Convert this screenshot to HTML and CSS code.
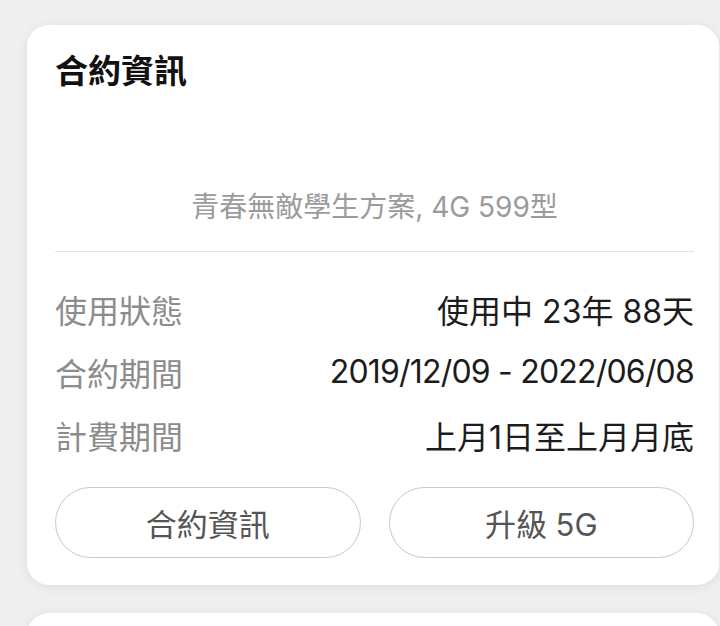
FILE: index.html
```html
<!DOCTYPE html>
<html lang="zh-Hant">
  <head>
    <meta charset="UTF-8" />
    <meta name="viewport" content="width=device-width, initial-scale=1.0" />
    <title>合約資訊</title>
    <link rel="stylesheet" href="styles.css">
  </head>
  <body>
    <div class="card" id="contract-card">
      <h2 class="card-title">合約資訊</h2>
      <p class="plan-name">青春無敵學生方案, 4G 599型</p>
      <div class="info-list">
        <div class="info-row">
          <span class="info-label">使用狀態</span>
          <span class="info-value">使用中 23年 88天</span>
        </div>
        <div class="info-row">
          <span class="info-label">合約期間</span>
          <span class="info-value date-range">2019/12/09 - 2022/06/08</span>
        </div>
        <div class="info-row">
          <span class="info-label">計費期間</span>
          <span class="info-value">上月1日至上月月底</span>
        </div>
      </div>
      <div class="actions">
        <button class="pill-btn">合約資訊</button>
        <button class="pill-btn">升級 5G</button>
      </div>
    </div>

    <div class="card card-next"></div>
  </body>
</html>
```

FILE: styles.css
```css
body {
  margin: 0;
  padding: 25px 1px 0 27px;
  background-color: #efefef;
  font-family: Inter, "Noto Sans CJK TC", sans-serif;
  overflow: hidden;
}

.card {
  background: #ffffff;
  border-radius: 22px;
  padding: 26px 25px 27px 28px;
  box-shadow: 0 2px 12px rgba(0, 0, 0, 0.07);
}

.card-title {
  margin: 0;
  font-size: 33px;
  line-height: 40px;
  font-weight: 700;
  color: #111;
}

.plan-name {
  margin: 96px 0 0;
  text-align: center;
  font-size: 28px;
  line-height: 40px;
  color: #9b9b9b;
  padding-bottom: 24px;
  border-bottom: 1px solid #e2e2e2;
}

.info-list {
  padding-top: 25px;
}

.info-row {
  display: flex;
  justify-content: space-between;
  align-items: center;
  height: 63px;
  font-size: 32px;
}

.info-label {
  color: #8c8c8c;
}

.info-value {
  color: #1c1c1c;
}

.date-range {
  letter-spacing: -0.8px;
}

.actions {
  display: flex;
  gap: 28px;
  margin-top: 21px;
}

.pill-btn {
  flex: 1;
  height: 71px;
  border: 1px solid #c9c9c9;
  border-radius: 36px;
  background: #ffffff;
  color: #555;
  font-family: inherit;
  font-size: 31px;
  cursor: pointer;
}

.card-next {
  margin-top: 28px;
  height: 60px;
}
```
